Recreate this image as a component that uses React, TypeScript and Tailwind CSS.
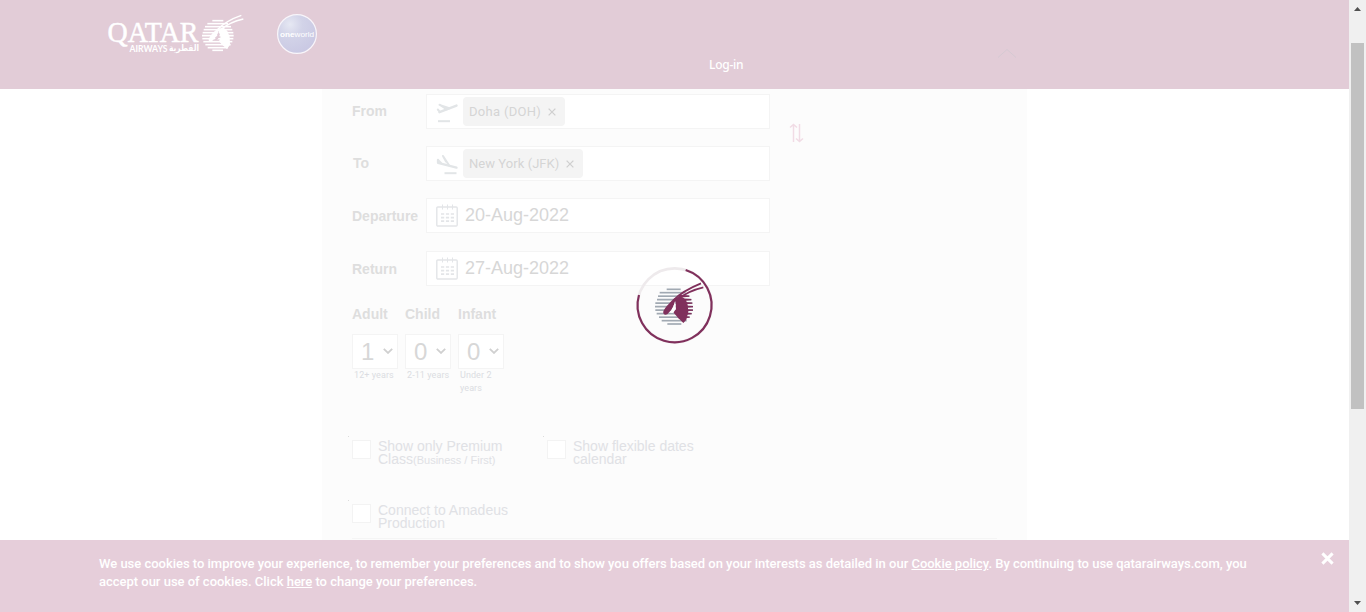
import React from "react";
import type { ReactNode } from "react";

function Oryx({ tone, lines }: { tone: string; lines: string }) {
  const rows: [number, number, number][] = [
    [118, 140, 182], [128, 119, 197], [138.5, 114, 208], [149, 111, 214], [159.5, 106, 217],
    [170, 105, 219], [180.5, 106, 219], [191, 110, 215], [201.5, 117, 209], [212, 125, 200], [222, 142, 184],
  ];
  return (
    <g>
      {rows.map(([y, a, b]) => (
        <path key={y} d={`M${a} ${y}H${b}`} stroke={lines} strokeWidth="5" />
      ))}
      {rows.slice(2, 9).map(([y, , b]) => (
        <path key={y} d={`M176 ${y - 4.5}L${b} ${y - 2}V${y + 2}L176 ${y + 4.5}Z`} fill={tone} />
      ))}
      <path fill={tone} d="M164 145 C151 155 137 171 130 184 C128 192 134 197 142 193 L153 181 C160 173 163 161 166 154 C169 166 166 178 161 188 L174 203 L190 219 L199 209 L202 197 L205 185 L203 165 L198 150 L188 142 L174 141 Z" />
      <path fill="#fff" d="M165 154 L168 178 L157 189 L149 187 C158 177 161 168 165 154Z" />
      <path fill="none" stroke={tone} strokeWidth="5.5" d="M160 151 C181 129 211 113 243 100" />
      <path fill="none" stroke={tone} strokeWidth="5" d="M172 149 C192 132 220 119 250 112" />
    </g>
  );
}

function HeaderOryx() {
  const rows: [number, number, number][] = [
    [62, 352, 385], [71, 337, 399], [80, 330, 408], [89, 326, 412], [98, 323, 415],
    [107, 321, 416], [116, 322, 415], [125, 325, 412], [134, 331, 407], [143, 338, 399], [151, 352, 384],
  ];
  return (
    <g fill="#fff" stroke="#fff">
      {rows.map(([y, a, b]) => (
        <path key={y} d={`M${a} ${y}H${b}`} strokeWidth="4.8" />
      ))}
      <path stroke="none" d="M368 86 C357 93 345 107 341 118 C340 125 346 127 351 124 L365 107 L371 93 L377 110 L372 124 L381 134 L396 147 L405 134 L404 110 L397 93 L386 83Z" />
      <path fill="#e2ccd7" stroke="none" d="M371 93 L374 110 L365 121 L358 119 C366 111 369 103 371 93Z" />
      <path fill="none" strokeWidth="4.2" d="M367 89 C385 70 410 56 439 46" />
      <path fill="none" strokeWidth="4.2" d="M377 89 C395 74 418 63 445 57" />
    </g>
  );
}

function Row({ label, gap, nudge = "", children }: { label: string; gap: string; nudge?: string; children: ReactNode }) {
  return (
    <div className={`flex h-[35px] items-center ${gap}`}>
      <div className={`w-[74px] shrink-0 text-[14px] font-bold text-[#dedede] ${nudge}`}>{label}</div>
      <div className="flex h-[35px] w-[344px] items-center border border-[#f4f4f4] bg-white pl-[9px]">{children}</div>
    </div>
  );
}

function Tag({ children, width }: { children: ReactNode; width: string }) {
  return (
    <div className={`ml-[5px] flex h-[29px] items-center justify-between rounded-[4px] bg-[#f4f4f4] pr-[9px] pl-[6px] font-[Roboto,sans-serif] text-[13px] text-[#d5d5d5] ${width}`}>
      <span className="whitespace-nowrap">{children}</span>
      <svg width="8" height="8" viewBox="0 0 9 9" stroke="#cfcfcf" strokeWidth="1.4"><path d="M.7.7l7.6 7.6M8.3.7L.7 8.3" /></svg>
    </div>
  );
}

function Plane({ landing = false }: { landing?: boolean }) {
  return (
    <svg className="shrink-0" width="22" height="24" viewBox="0 0 22 24" fill="none" stroke="#e2e5e7" strokeLinecap="round" strokeLinejoin="round">
      {landing ? (
        <>
          <path d="M2 7.8v3l18.5 4.9" strokeWidth="2.3" />
          <path d="M2 8l3 3M7 4l6 9.2M7 4l3 5.5" strokeWidth="2" />
          <path d="M8.5 21.2h12" strokeWidth="2" strokeLinecap="butt" />
        </>
      ) : (
        <>
          <path d="M3.5 12.2L20.5 5.6" strokeWidth="2.4" />
          <path d="M1.8 9.5l2 2.4M3.5 4.9l9.8 3.4M4 4.9l6.8 4.4" strokeWidth="2" />
          <path d="M2 21.2h12" strokeWidth="2" strokeLinecap="butt" />
        </>
      )}
    </svg>
  );
}

function DateValue({ children }: { children: ReactNode }) {
  return (
    <>
      <svg className="mb-[1px] shrink-0" width="22" height="23" viewBox="0 0 22 23" fill="none" stroke="#e3e5e8">
        <rect x=".8" y="3" width="20.4" height="19" rx="1" strokeWidth="1.4" />
        <path d="M6.5.5v5M11.5.5v5M16.5.5v5" strokeWidth="1" />
        <path d="M5 10h13M5 13.6h13M5 17.2h13" strokeWidth="1.7" strokeDasharray="3.2 1.7" />
      </svg>
      <span className="mb-[2px] ml-[7px] text-[18px] leading-[20px] text-[#d7d7d7]">{children}</span>
    </>
  );
}

function Passenger({ label, value, hint }: { label: string; value: string; hint: string }) {
  return (
    <div className="w-[46px]">
      <div className="h-[28px] text-[14px] leading-[16px] font-bold text-[#dedede]">{label}</div>
      <div className="flex h-[35px] w-[46px] items-center justify-between border border-[#f4f4f4] bg-white pr-[4px] pl-[8px]">
        <span className="pt-[1px] text-[24px] leading-[32px] text-[#d7d7d7]">{value}</span>
        <svg className="mb-[1px]" width="10" height="6" viewBox="0 0 10 6" fill="none" stroke="#d0d0d0" strokeWidth="1.8"><path d="M.8.8L5 4.9 9.2.8" /></svg>
      </div>
      <div className="w-[46px] pl-[2px] font-[Roboto,sans-serif] text-[9px] leading-[13px] tracking-[0.08px] text-[#dbdce2]">{hint}</div>
    </div>
  );
}

function Check({ children }: { children: ReactNode }) {
  return (
    <div className="flex w-[195px] items-start">
      <i className="-mt-[4px] mr-[3px] -ml-[4px] h-px w-px bg-[#dcdcdc]" />
      <div className="mr-[7px] h-[19px] w-[19px] shrink-0 border border-[#f3f3f3] bg-white" />
      <div className="text-[14px] leading-[13px] whitespace-nowrap text-[#e0e1e5]">{children}</div>
    </div>
  );
}

export default function App() {
  return (
    <div className="relative flex h-[612px] w-[1366px] overflow-hidden bg-white font-['Liberation_Sans',Arial,sans-serif]">
      <div className="flex w-[1349px] flex-col">
        <header className="flex h-[89px] shrink-0 items-start bg-[#e2ccd7] pl-[95px]">
          <svg className="shrink-0" width="160" height="60" viewBox="0 0 160 60">
            <g fill="#fff" stroke="none">
              <text x="12.5" y="42" fontFamily="Liberation Serif, serif" fontSize="29.5" textLength="91" lengthAdjust="spacingAndGlyphs" stroke="#fff" strokeWidth=".5">QATAR</text>
              <text x="34.5" y="52" fontFamily="Lato, sans-serif" fontSize="9" fontWeight="700" textLength="38" lengthAdjust="spacingAndGlyphs">AIRWAYS</text>
              <text x="74" y="51" fontFamily="DejaVu Sans, sans-serif" fontSize="9" fontWeight="700" textLength="30" lengthAdjust="spacingAndGlyphs">القطرية</text>
            </g>
            <g transform="scale(.33333)"><HeaderOryx /></g>
          </svg>
          <svg className="mt-[13px] ml-[21px] shrink-0" width="42" height="42" viewBox="0 0 42 42">
            <defs>
              <radialGradient id="globe" cx=".32" cy=".25" r=".8">
                <stop offset="0" stopColor="#e6e8f3" /><stop offset=".4" stopColor="#d2d3e8" /><stop offset="1" stopColor="#c9c8e3" />
              </radialGradient>
            </defs>
            <circle cx="21" cy="21" r="19.4" fill="url(#globe)" stroke="#f8f5fa" strokeWidth="1.2" />
            <text x="4" y="23.5" fill="#fff" fontFamily="Liberation Sans, sans-serif" fontSize="7.6" textLength="34" lengthAdjust="spacingAndGlyphs"><tspan fontWeight="700">one</tspan>world</text>
          </svg>
          <span className="mt-[57px] ml-[391px] w-[280px] font-['Noto_Sans',sans-serif] text-[12px] leading-[16px] font-medium tracking-[-0.25px] text-white">Log-in</span>
          <svg className="mt-[49px] ml-[8px]" width="20" height="9" viewBox="0 0 20 9" fill="none" stroke="#d5c9d2"><path d="M1 8.5l9-8 9 8" /></svg>
        </header>

        <main className="flex h-[451px] shrink-0 pl-[322px]">
          <section className="flex h-[451px] w-[705px] flex-col bg-[#fcfcfc] pl-[30px]">
            <div className="flex">
              <div className="w-[418px]">
                <Row label="From" gap="mt-[5px]"><Plane /><Tag width="w-[102px]"><span className="tracking-[0.3px]">Doha (DOH)</span></Tag></Row>
                <Row label="To" gap="mt-[17px]" nudge="pl-[1px]"><Plane landing /><Tag width="w-[120px]"><span className="tracking-[0.05px]">New York (JFK)</span></Tag></Row>
                <Row label="Departure" gap="mt-[17px]" nudge="pt-[2px]"><DateValue>20-Aug-2022</DateValue></Row>
                <Row label="Return" gap="mt-[18px]" nudge="pt-[2px]"><DateValue>27-Aug-2022</DateValue></Row>
              </div>
              <svg className="mt-[34px] ml-[19px]" width="15" height="20" viewBox="0 0 15 20" fill="none" stroke="#f1dce5" strokeWidth="1.5"><path d="M4.5 19V1.5M1 4.5l3.5-3L8 4.5M10.5 1v17.5M7 15.5l3.5 3 3.5-3" /></svg>
            </div>
            <div className="mt-[20px] flex h-[130px] shrink-0 gap-[7px]">
              <Passenger label="Adult" value="1" hint="12+ years" />
              <Passenger label="Child" value="0" hint="2-11 years" />
              <Passenger label="Infant" value="0" hint="Under 2 years" />
            </div>
            <div className="mt-[4px] flex h-[64px] shrink-0">
              <Check>Show only Premium<br />Class<span className="text-[11px]">(Business / First)</span></Check>
              <Check>Show flexible dates<br />calendar</Check>
            </div>
            <div className="flex h-[34px] shrink-0"><Check>Connect to Amadeus<br />Production</Check></div>
            <div className="h-px w-[645px] bg-[#f5f5f5]" />
          </section>
        </main>

        <footer className="flex h-[72px] shrink-0 bg-[#e6ceda] pl-[99px]">
          <p className="w-[1222px] pt-[15px] font-[Roboto,sans-serif] text-[13px] leading-[18px] font-medium tracking-[-0.016px] whitespace-nowrap text-white">
            We use cookies to improve your experience, to remember your preferences and to show you offers based on your interests as detailed in our <u>Cookie policy</u>. By continuing to use qatarairways.com, you<br />
            accept our use of cookies. Click <u>here</u> to change your preferences.
          </p>
          <svg className="mt-[12px]" width="13" height="13" viewBox="0 0 13 13" stroke="#fff" strokeWidth="3"><path d="M1.4 1.4l10.2 10.2M11.6 1.4L1.4 11.6" /></svg>
        </footer>
      </div>

      <aside className="flex w-[17px] flex-col items-center bg-[#f0f0f0]">
        <svg className="mt-[7px]" width="7" height="4" viewBox="0 0 7 4" fill="#505050"><path d="M0 4L3.5 0 7 4z" /></svg>
        <div className="mt-[32px] h-[366px] w-[13px] bg-[#c1c1c1]" />
        <svg className="mt-auto mb-[7px]" width="7" height="4" viewBox="0 0 7 4" fill="#505050"><path d="M0 0h7L3.5 4z" /></svg>
      </aside>

      <svg className="absolute top-[250px] left-[620px]" width="110" height="110" viewBox="0 0 330 330">
        <circle cx="164" cy="166" r="111" fill="none" stroke="#eeeaec" strokeWidth="8" />
        <path d="M197 60A111 111 0 1 1 57 135" fill="none" stroke="#80305c" strokeWidth="6.5" />
        <Oryx tone="#80305c" lines="#a1a9b2" />
      </svg>
    </div>
  );
}
